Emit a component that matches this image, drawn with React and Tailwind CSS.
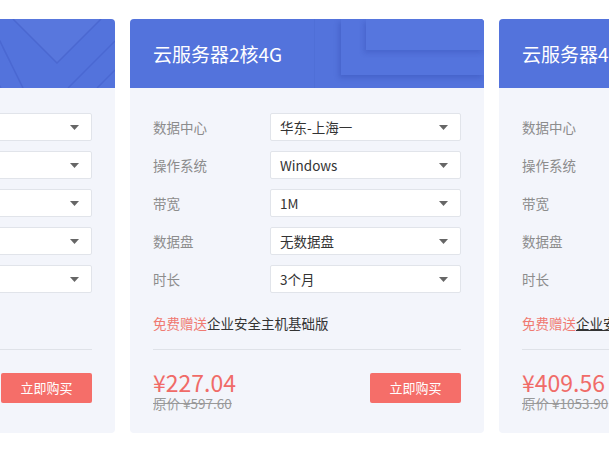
import React from "react";

const rows = [
  { label: "数据中心", value: "华东-上海一" },
  { label: "操作系统", value: "Windows" },
  { label: "带宽", value: "1M" },
  { label: "数据盘", value: "无数据盘" },
  { label: "时长", value: "3个月" },
];

const cards = [
  { title: "云服务器1核2G", price: "¥117.02", orig: "原价 ¥298.80", pattern: "v", underline: false },
  { title: "云服务器2核4G", price: "¥227.04", orig: "原价 ¥597.60", pattern: "rect", underline: false },
  { title: "云服务器4核8G", price: "¥409.56", orig: "原价 ¥1053.90", pattern: "none", underline: true },
];

function VPattern() {
  return (
    <svg className="absolute inset-0" width="354" height="69" viewBox="0 0 354 69" fill="none">
      <path d="M252 0 L296 44 L340 0 Z" fill="rgba(255,255,255,0.03)" />
      <path d="M252 0 L296 44 L340 0" stroke="rgba(40,60,170,0.22)" strokeWidth="1.5" />
      <path d="M232 8 L262 69" stroke="rgba(40,60,170,0.2)" strokeWidth="1.5" />
      <path d="M218 30 L240 69" stroke="rgba(40,60,170,0.15)" strokeWidth="1.5" />
      <path d="M307 69 L354 22" stroke="rgba(40,60,170,0.2)" strokeWidth="1.5" />
      <path d="M336 69 L354 51" stroke="rgba(40,60,170,0.2)" strokeWidth="1.5" />
    </svg>
  );
}

function RectPattern() {
  return (
    <>
      <div className="absolute left-[184px] top-0 h-full w-[1px] bg-[rgba(40,60,170,0.08)]" />
      <div className="absolute left-[211px] top-0 h-[56px] w-[143px] bg-[#5474dd] shadow-[-2px_3px_5px_rgba(30,50,150,0.25)]" />
      <div className="absolute left-[236px] top-0 h-[31px] w-[118px] bg-[#5676de] shadow-[-2px_3px_5px_rgba(30,50,150,0.22)]" />
    </>
  );
}

function Card({ card }) {
  return (
    <div className="w-[354px] shrink-0 bg-[#f3f5fb] rounded-[4px] overflow-hidden">
      <div className="relative h-[69px] bg-[#5373dc] overflow-hidden">
        {card.pattern === "v" && <VPattern />}
        {card.pattern === "rect" && <RectPattern />}
        <div className="relative pl-[23px] h-full flex items-center text-[19px] text-white leading-none">
          {card.title}
        </div>
      </div>
      <div className="px-[23px] pt-[25px] pb-[22px]">
        <div className="flex flex-col gap-[10px]">
          {rows.map((r) => (
            <div key={r.label} className="flex items-center h-[28px]">
              <div className="w-[117px] text-[13.5px] text-[#8c8c8c]">{r.label}</div>
              <div className="flex-1 h-[28px] bg-white border border-[#e1e4ea] rounded-[2px] flex items-center justify-between pl-[9px] pr-[12px]">
                <span className="text-[13.5px] text-[#333]">{r.value}</span>
                <svg width="9" height="5" viewBox="0 0 9 5">
                  <path d="M0 0 L9 0 L4.5 5 Z" fill="#666" />
                </svg>
              </div>
            </div>
          ))}
        </div>
        <div className="mt-[21px] text-[13.5px] leading-[18px] text-[#333]">
          <span className="text-[#f07a72]">免费赠送</span>
          <span className={card.underline ? "underline" : ""}>企业安全主机基础版</span>
        </div>
        <div className="mt-[17px] border-t border-[#dfe2e8]" />
        <div className="mt-[23px] flex justify-between items-start">
          <div className="flex flex-col mt-[-4px]">
            <div className="text-[23px] leading-[26px] text-[#f06b68]">{card.price}</div>
            <div className="text-[13.5px] leading-[16px] text-[#999] line-through">{card.orig}</div>
          </div>
          <div className="w-[91px] h-[30px] bg-[#f56e69] rounded-[2px] flex items-center justify-center text-[13px] text-white">
            立即购买
          </div>
        </div>
      </div>
    </div>
  );
}

export default function App() {
  return (
    <div className="w-[609px] h-[457px] bg-white overflow-hidden font-['Noto_Sans_CJK_SC',sans-serif]">
      <div className="flex gap-[15px] ml-[-239px] mt-[19px]">
        {cards.map((c) => (
          <Card key={c.title} card={c} />
        ))}
      </div>
    </div>
  );
}
